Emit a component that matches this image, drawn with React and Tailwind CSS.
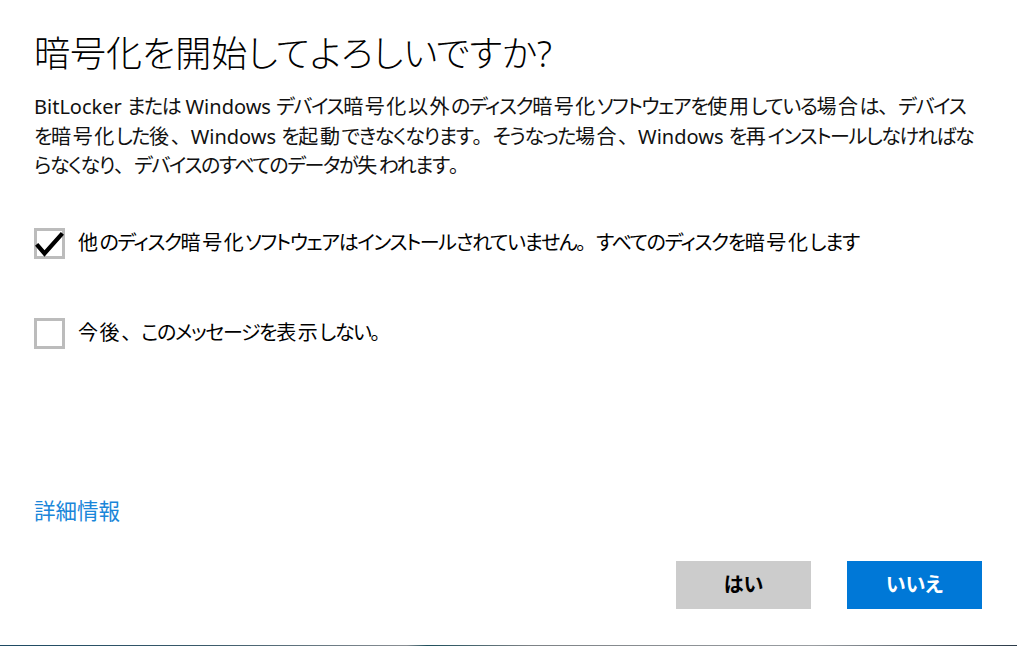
import React from 'react'

const font = "font-['Noto_Sans','Noto_Sans_CJK_JP',sans-serif] [font-feature-settings:'palt']"

// Yu Gothic UI style: wide kanji, narrow kana, full-width punctuation
function Jp({ text }) {
  const parts = text.split(/([\u4e00-\u9fff]+|[、。]|[\u3040-\u30ff]+)/).filter(Boolean)
  return parts.map((p, i) => {
    if (/^[\u4e00-\u9fff]/.test(p)) return <span key={i} className="tracking-[1.6px]">{p}</span>
    if (/^[、。]$/.test(p)) return <span key={i} className="[font-feature-settings:normal]">{p}</span>
    if (/^[\u3040-\u30ff]/.test(p)) return <span key={i} className="tracking-[-1.4px]">{p}</span>
    return <span key={i}>{p}</span>
  })
}

function Checkbox({ checked, label }) {
  return (
    <label className="flex items-center gap-[13px] cursor-pointer">
      <span className="w-[31px] h-[31px] border-[3px] border-[#bcbcbc] bg-white flex items-center justify-center shrink-0">
        {checked && (
          <svg width="31" height="31" viewBox="0 0 31 31" className="-m-[3px]">
            <path d="M4 18 L10.5 25.5 L27 7" fill="none" stroke="#000" strokeWidth="4.2" strokeLinecap="square" />
          </svg>
        )}
      </span>
      <span className="text-[20px] leading-[30px] text-black whitespace-nowrap"><Jp text={label} /></span>
    </label>
  )
}

export default function App() {
  return (
    <div className={`${font} w-full h-[646px] bg-white flex flex-col`}>
      <div className="flex-1 flex flex-col pl-[34px] pr-[35px]">
        {/* Header */}
        <h1 className="pt-[32px] text-[36px] leading-[44px] text-black font-light">
          暗号化を開始してよろしいですか?
        </h1>
        <p className="mt-[16px] text-[20px] leading-[29.5px] text-[#111] whitespace-nowrap">
          <Jp text="BitLocker または Windows デバイス暗号化以外のディスク暗号化ソフトウェアを使用している場合は、デバイス" /><br />
          <Jp text="を暗号化した後、Windows を起動できなくなります。そうなった場合、Windows を再インストールしなければな" /><br />
          <Jp text="らなくなり、デバイスのすべてのデータが失われます。" />
        </p>

        {/* Options */}
        <div className="mt-[47px]">
          <Checkbox checked label="他のディスク暗号化ソフトウェアはインストールされていません。すべてのディスクを暗号化します" />
        </div>
        <div className="mt-[59px]">
          <Checkbox label="今後、このメッセージを表示しない。" />
        </div>

        <div className="mt-auto">
          <a href="#" className="block text-[21.5px] leading-[30px] text-[#1a86d9]">詳細情報</a>
          <div className="mt-[35px] mb-[36px] flex justify-end gap-[36px]">
            <button className="w-[135px] h-[48px] bg-[#cccccc] text-black text-[20px] font-bold">はい</button>
            <button className="w-[135px] h-[48px] bg-[#0078d7] text-white text-[20px] font-bold">いいえ</button>
          </div>
        </div>
      </div>
      <div className="h-px bg-[linear-gradient(90deg,#1d4a63,#3a5a6a_20%,#8a8f94_40%,#1e4f5c_42%,#7d8286_52%,#9a9ea2_80%,#2a3a48)]" />
    </div>
  )
}
